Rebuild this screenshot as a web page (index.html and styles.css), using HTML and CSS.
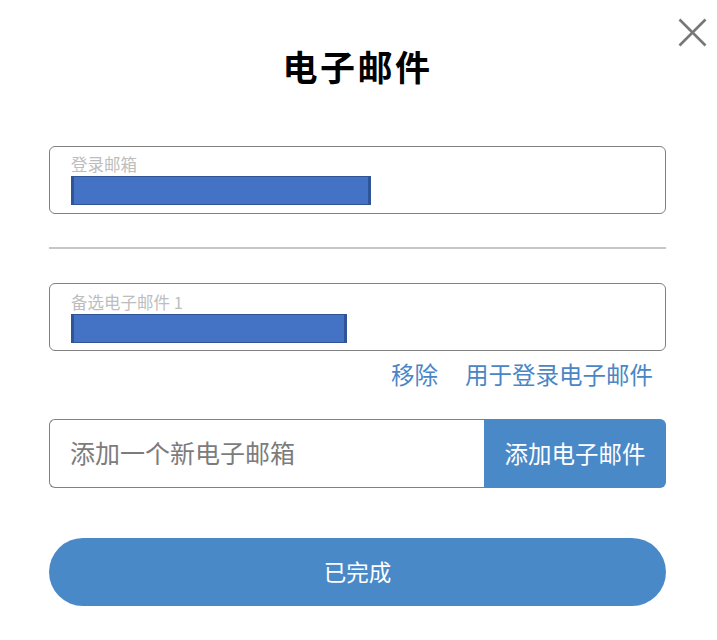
FILE: index.html
```html
<!DOCTYPE html>
<html lang="zh-CN">
<head>
<meta charset="utf-8">
<title>电子邮件</title>
<link rel="stylesheet" href="styles.css">
</head>
<body>
<div class="dialog">
  <button class="close" aria-label="关闭">
    <svg width="29" height="29" viewBox="0 0 29 29"><path d="M1.5 1.5 L27.5 27.5 M27.5 1.5 L1.5 27.5" stroke="#777" stroke-width="2.6" fill="none"/></svg>
  </button>
  <h1 class="title">电子邮件</h1>
  <div class="field field-primary">
    <div class="field-label">登录邮箱</div>
    <div class="redact redact-long"></div>
  </div>
  <hr class="divider">
  <div class="field field-alt">
    <div class="field-label">备选电子邮件 1</div>
    <div class="redact redact-short"></div>
  </div>
  <div class="actions">
    <a class="link">移除</a>
    <a class="link">用于登录电子邮件</a>
  </div>
  <div class="add-row">
    <input class="add-input" type="text" placeholder="添加一个新电子邮箱">
    <button class="add-btn">添加电子邮件</button>
  </div>
  <button class="done">已完成</button>
</div>
</body>
</html>
```
FILE: styles.css
```css
* { box-sizing: border-box; }
html, body { margin: 0; padding: 0; background: #fff; }
body {
  font-family: "Noto Sans CJK SC", "Microsoft YaHei", sans-serif;
  width: 717px;
  height: 640px;
  overflow: hidden;
}
.dialog {
  position: relative;
  width: 617px;
  margin-left: 49px;
  padding-top: 41px;
  display: flex;
  flex-direction: column;
}
.close {
  position: absolute;
  top: 18px;
  left: 629px;
  width: 29px;
  height: 29px;
  padding: 0;
  border: 0;
  background: transparent;
  display: block;
}
.close svg { display: block; }
.title {
  margin: 0;
  text-align: center;
  font-size: 35px;
  line-height: 50px;
  height: 48px;
  font-weight: 700;
  color: #000;
  letter-spacing: 2.5px;
  padding-left: 0;
}
.field {
  height: 68px;
  border: 1px solid #808080;
  border-radius: 6px;
  padding: 7px 0 0 21px;
}
.field-primary { margin-top: 57px; }
.field-label {
  font-size: 16.5px;
  line-height: 21px;
  color: #bdbdbd;
}
.redact {
  height: 29px;
  background: #4472c4;
  border: 1px solid #2f5597;
  border-left-width: 3px;
  border-right-width: 3px;
  margin-top: 1px;
}
.redact-long { width: 300px; }
.redact-short { width: 276px; }
.divider {
  margin: 33px 0 0;
  border: 0;
  height: 2px;
  background: #c6c6c6;
}
.field-alt { margin-top: 34px; padding-top: 8px; }
.actions {
  display: flex;
  justify-content: flex-end;
  gap: 27px;
  padding-right: 13px;
  margin-top: 6px;
  height: 34px;
  margin-bottom: 2px;
}
.link {
  font-size: 23.5px;
  line-height: 34px;
  color: #4a86c6;
  cursor: pointer;
}
.add-row {
  display: flex;
  margin-top: 26px;
  height: 69px;
}
.add-input {
  flex: 0 0 435px;
  height: 69px;
  border: 1px solid #808080;
  border-right: 0;
  border-radius: 6px 0 0 6px;
  padding: 0 0 3px 20px;
  font-family: inherit;
  font-size: 25px;
  color: #333;
  outline: none;
}
.add-input::placeholder { color: #7c7c7c; }
.add-btn {
  flex: 1;
  height: 69px;
  border: 0;
  border-radius: 0 6px 6px 0;
  background: #4a89c8;
  color: #fff;
  font-family: inherit;
  font-size: 23.5px;
  padding: 0 0 2px;
}
.done {
  margin-top: 50px;
  height: 68px;
  border: 0;
  border-radius: 34px;
  background: #4a89c8;
  color: #fff;
  font-family: inherit;
  font-size: 22.5px;
  padding: 0 0 2px;
}
```
